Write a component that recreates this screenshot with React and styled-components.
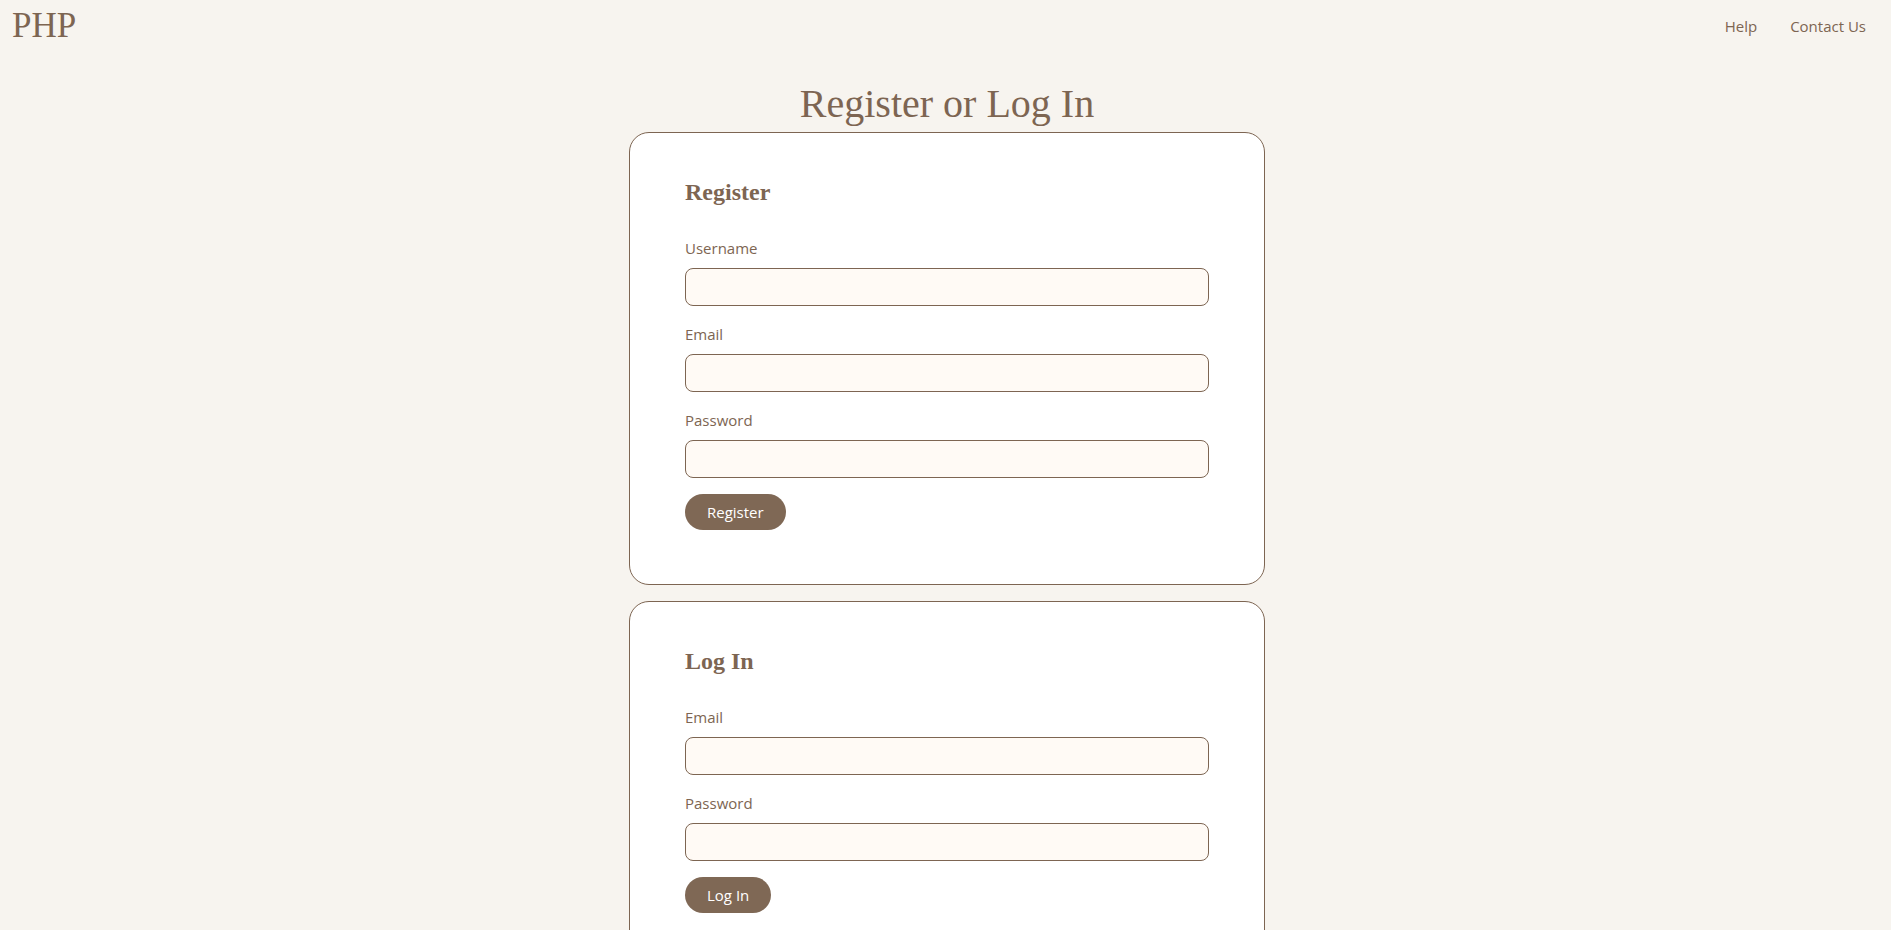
import * as React from "react";
import styled, { createGlobalStyle } from "styled-components";

const brown = "#7d6552";

const Global = createGlobalStyle`
  html, body {
    margin: 0;
    padding: 0;
    background: #f7f4ef;
  }
  * { box-sizing: border-box; }
`;

const Page = styled.div`
  min-height: 100vh;
  background: #f7f4ef;
  color: ${brown};
  font-family: "Open Sans", "Noto Sans", sans-serif;
`;

const Header = styled.header`
  display: flex;
  justify-content: space-between;
  align-items: flex-start;
  padding: 5px 25px 0 12px;
`;

const Logo = styled.div`
  font-family: "Liberation Serif", serif;
  font-size: 35px;
  line-height: 41px;
  color: ${brown};
`;

const Nav = styled.nav`
  display: flex;
  gap: 33px;
  padding-top: 10px;
`;

const NavLink = styled.a`
  font-size: 15px;
  line-height: 22px;
  color: ${brown};
  text-decoration: none;
  cursor: pointer;
`;

const Main = styled.main`
  display: flex;
  flex-direction: column;
  align-items: center;
  padding: 35px 0 0 3px;
  gap: 16px;
`;

const Title = styled.h1`
  margin: 0 0 -11px;
  font-family: "Liberation Serif", serif;
  font-weight: 400;
  font-size: 40px;
  line-height: 46px;
  color: ${brown};
`;

const Card = styled.section`
  width: 636px;
  background: #ffffff;
  border: 1px solid ${brown};
  border-radius: 20px;
  padding: 45px 55px 54px;
`;

const CardTitle = styled.h2`
  margin: 0 0 31px;
  font-family: "Liberation Serif", serif;
  font-weight: 700;
  font-size: 24px;
  line-height: 28px;
  color: ${brown};
`;

const Label = styled.label`
  display: block;
  font-size: 15px;
  line-height: 22px;
  margin-bottom: 9px;
  color: ${brown};
`;

const Input = styled.input`
  display: block;
  width: 100%;
  height: 38px;
  margin: 0 0 17px;
  padding: 0 12px;
  border: 1px solid ${brown};
  border-radius: 8px;
  background: #fffaf5;
  font-family: inherit;
  font-size: 15px;
  color: ${brown};
  outline: none;
`;

const Button = styled.button`
  display: inline-flex;
  align-items: center;
  height: 36px;
  margin-top: -1px;
  padding: 0 22px;
  border: none;
  border-radius: 18px;
  background: #7f6855;
  color: #ffffff;
  font-family: "Open Sans", "Noto Sans", sans-serif;
  font-size: 15px;
  cursor: pointer;
`;

function Field({ label, type = "text" }) {
  return (
    <>
      <Label>{label}</Label>
      <Input type={type} />
    </>
  );
}

export default function App() {
  return (
    <Page>
      <Global />
      <Header>
        <Logo>PHP</Logo>
        <Nav>
          <NavLink>Help</NavLink>
          <NavLink>Contact Us</NavLink>
        </Nav>
      </Header>
      <Main>
        <Title>Register or Log In</Title>
        <Card>
          <CardTitle>Register</CardTitle>
          <Field label="Username" />
          <Field label="Email" type="email" />
          <Field label="Password" type="password" />
          <Button>Register</Button>
        </Card>
        <Card>
          <CardTitle>Log In</CardTitle>
          <Field label="Email" type="email" />
          <Field label="Password" type="password" />
          <Button>Log In</Button>
        </Card>
      </Main>
    </Page>
  );
}
